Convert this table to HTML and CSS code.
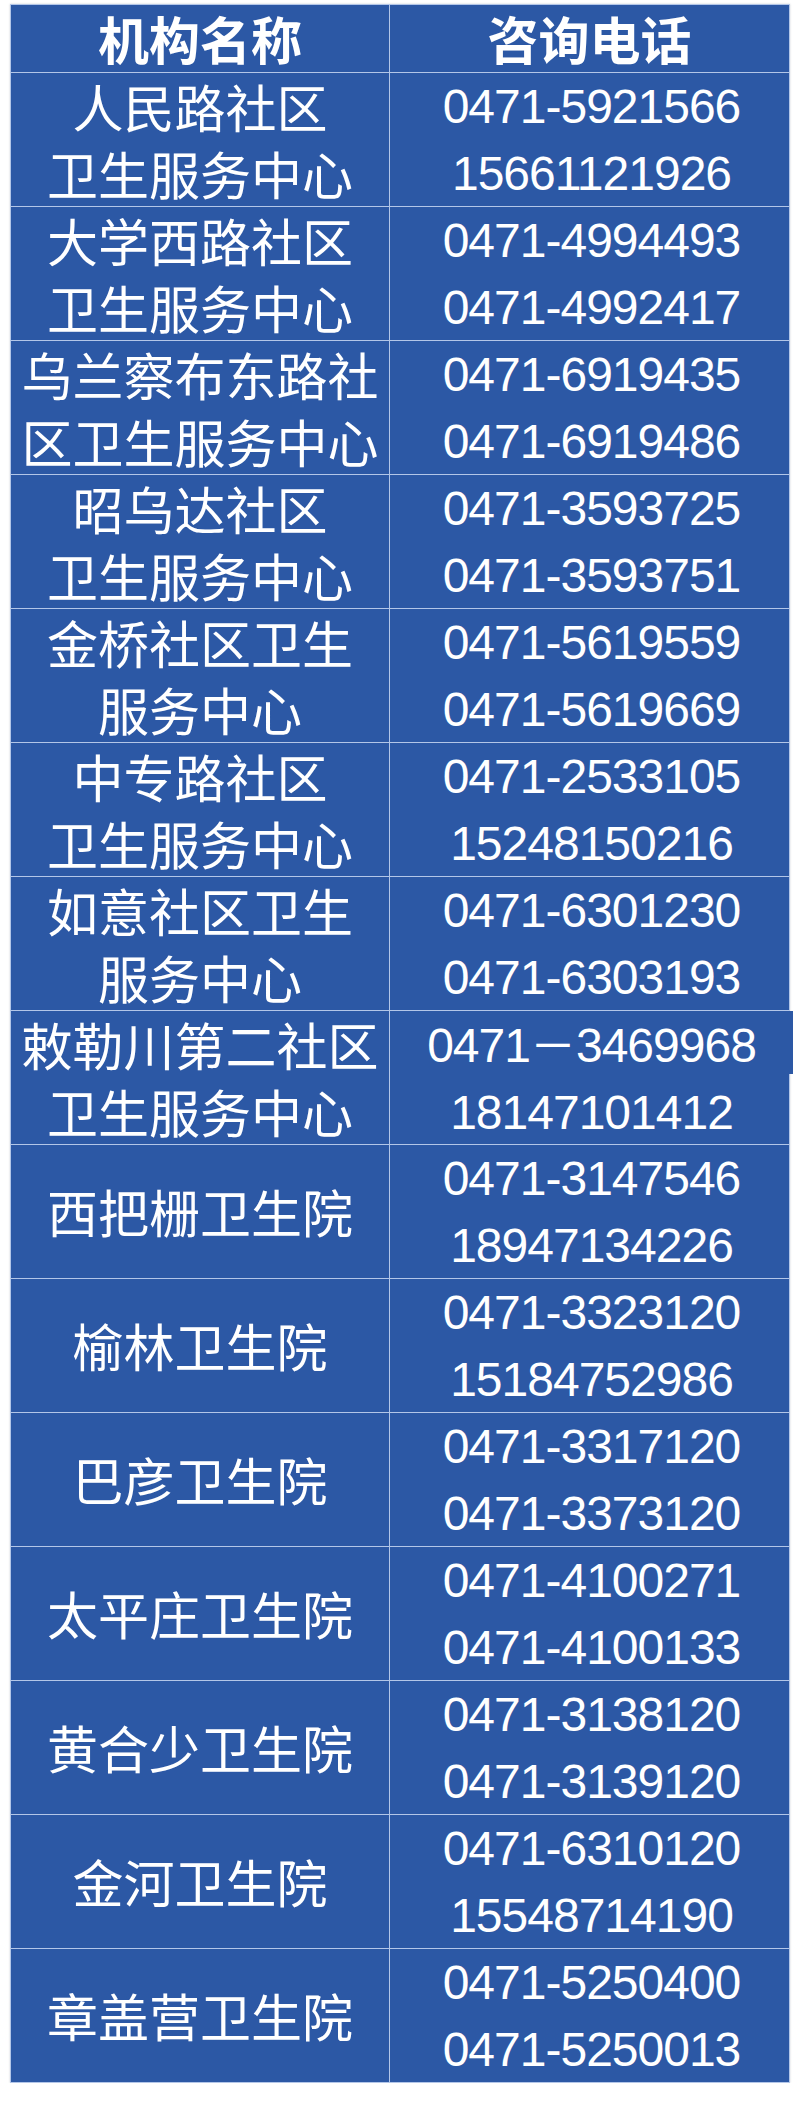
FILE: index.html
```html
<!DOCTYPE html>
<html lang="zh-CN">
<head>
<meta charset="utf-8">
<title>咨询电话</title>
<link rel="stylesheet" href="styles.css">
</head>
<body>
<div class="sheet">
  <div class="grid">
    <div class="cell head"><p>机构名称</p></div>
    <div class="cell head"><p>咨询电话</p></div>

    <div class="cell name"><p>人民路社区</p><p>卫生服务中心</p></div>
    <div class="cell tel"><p>0471-5921566</p><p>15661121926</p></div>

    <div class="cell name"><p>大学西路社区</p><p>卫生服务中心</p></div>
    <div class="cell tel"><p>0471-4994493</p><p>0471-4992417</p></div>

    <div class="cell name"><p>乌兰察布东路社</p><p>区卫生服务中心</p></div>
    <div class="cell tel"><p>0471-6919435</p><p>0471-6919486</p></div>

    <div class="cell name"><p>昭乌达社区</p><p>卫生服务中心</p></div>
    <div class="cell tel"><p>0471-3593725</p><p>0471-3593751</p></div>

    <div class="cell name"><p>金桥社区卫生</p><p>服务中心</p></div>
    <div class="cell tel"><p>0471-5619559</p><p>0471-5619669</p></div>

    <div class="cell name"><p>中专路社区</p><p>卫生服务中心</p></div>
    <div class="cell tel"><p>0471-2533105</p><p>15248150216</p></div>

    <div class="cell name"><p>如意社区卫生</p><p>服务中心</p></div>
    <div class="cell tel"><p>0471-6301230</p><p>0471-6303193</p></div>

    <div class="cell name"><p>敕勒川第二社区</p><p>卫生服务中心</p></div>
    <div class="cell tel splice"><p>0471<span class="wide">－</span>3469968</p><p>18147101412</p></div>

    <div class="cell name"><p>西把栅卫生院</p></div>
    <div class="cell tel"><p>0471-3147546</p><p>18947134226</p></div>

    <div class="cell name"><p>榆林卫生院</p></div>
    <div class="cell tel"><p>0471-3323120</p><p>15184752986</p></div>

    <div class="cell name"><p>巴彦卫生院</p></div>
    <div class="cell tel"><p>0471-3317120</p><p>0471-3373120</p></div>

    <div class="cell name"><p>太平庄卫生院</p></div>
    <div class="cell tel"><p>0471-4100271</p><p>0471-4100133</p></div>

    <div class="cell name"><p>黄合少卫生院</p></div>
    <div class="cell tel"><p>0471-3138120</p><p>0471-3139120</p></div>

    <div class="cell name"><p>金河卫生院</p></div>
    <div class="cell tel"><p>0471-6310120</p><p>15548714190</p></div>

    <div class="cell name"><p>章盖营卫生院</p></div>
    <div class="cell tel"><p>0471-5250400</p><p>0471-5250013</p></div>
  </div>
</div>
</body>
</html>
```

FILE: styles.css
```css
html, body {
  margin: 0;
  padding: 0;
  background: #ffffff;
}

.sheet {
  padding: 4px 0 0 10px;
}

.grid {
  width: 778px;
  display: grid;
  grid-template-columns: 378px 1fr;
  grid-template-rows: 67px;
  grid-auto-rows: 133px;
  gap: 1px;
  padding: 1px;
  background: #b3c6e8;
  box-shadow: 0 0 2px rgba(120, 130, 150, 0.35);
}

.cell {
  background: #2c58a5;
  color: #ffffff;
  display: flex;
  flex-direction: column;
  align-items: center;
  justify-content: center;
  text-align: center;
  line-height: 67px;
}

.cell p {
  margin: 0;
  white-space: nowrap;
}

.head {
  font-family: "Noto Sans CJK SC", "Noto Sans", sans-serif;
  font-weight: 700;
  font-size: 51px;
}

.name {
  font-family: "Noto Sans CJK SC", "Noto Sans", sans-serif;
  font-weight: 400;
  font-size: 51px;
}

.tel {
  font-family: "Liberation Sans", Arial, sans-serif;
  font-size: 48px;
  letter-spacing: -1px;
}

.tel p {
  padding-left: 4px;
}

.wide {
  font-family: "Noto Sans CJK SC", sans-serif;
  font-size: 46px;
  letter-spacing: 0;
}

.splice {
  position: relative;
}

.splice::after {
  content: "";
  position: absolute;
  right: -4px;
  top: 0;
  width: 4px;
  height: 63px;
  background: #2c58a5;
}
```
